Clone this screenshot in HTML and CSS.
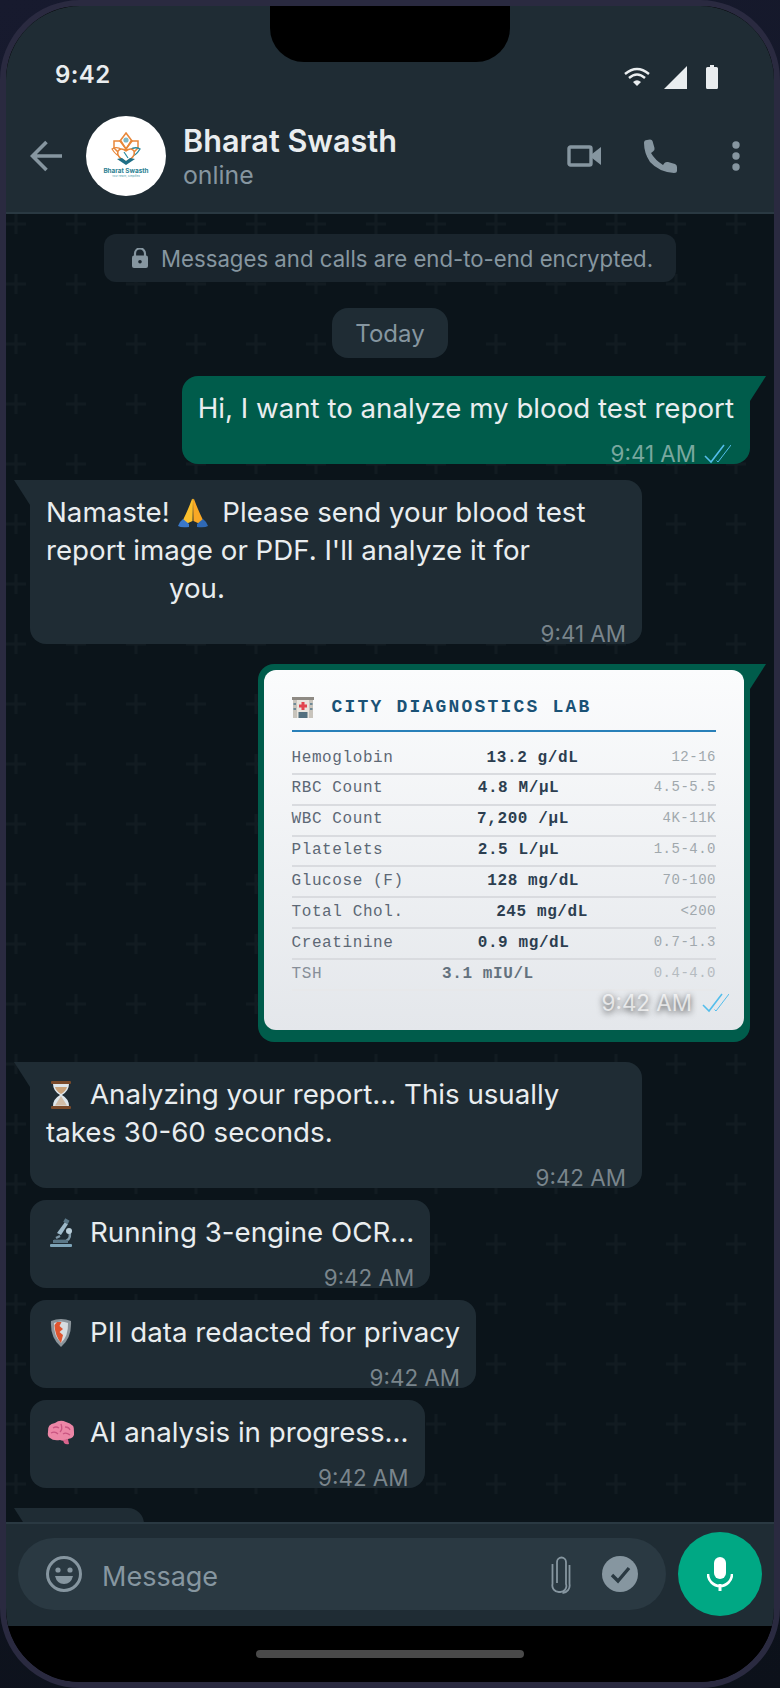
FILE: index.html
```html
<!DOCTYPE html>
<html lang="en">
<head>
<meta charset="utf-8">
<title>Bharat Swasth</title>
<link rel="stylesheet" href="styles.css">
</head>
<body>
<div class="phone">
  <div class="screen">
    <div class="notch"></div>
    <header class="top">
      <div class="status">
        <span class="clock">9:42</span>
        <div class="status-icons">
          <svg class="i-wifi" viewBox="0 0 26 20"><path d="M1 7 Q13 -3 25 7" fill="none" stroke="#e9edef" stroke-width="2.4"/><path d="M5 11 Q13 4 21 11" fill="none" stroke="#e9edef" stroke-width="2.4"/><path d="M9 15 Q13 11.5 17 15 L13 19 Z" fill="#e9edef"/></svg>
          <svg class="i-signal" viewBox="0 0 23 23"><path d="M0 23 L23 0 V23 Z" fill="#e9edef"/></svg>
          <svg class="i-batt" viewBox="0 0 12 24"><path d="M4 0 H8 V2 H10.5 Q12 2 12 3.5 V22.5 Q12 24 10.5 24 H1.5 Q0 24 0 22.5 V3.5 Q0 2 1.5 2 H4 Z" fill="#e9edef"/></svg>
        </div>
      </div>
      <div class="bar">
        <svg class="i-back" viewBox="0 0 32 32"><path d="M16.5 2 L2.5 16 L16.5 30 M3 16 H32" fill="none" stroke="#8696a0" stroke-width="3.6"/></svg>
        <div class="avatar">
          <svg viewBox="0 0 80 80" class="logo">
            <path d="M40 17 L46 25 L40 33 L34 25 Z" fill="none" stroke="#e8873a" stroke-width="1.6"/>
            <path d="M28 25 H35 L40 33 L33 37 L28 32 Z M52 25 H45 L40 33 L47 37 L52 32 Z" fill="none" stroke="#e8873a" stroke-width="1.5"/>
            <path d="M26 33 Q31 30 36 34 L36 40 Q31 41 26 33 Z" fill="none" stroke="#e8873a" stroke-width="1.2"/>
            <path d="M54 33 Q49 30 44 34 L44 40 Q49 41 54 33 Z" fill="none" stroke="#2a8a9e" stroke-width="1.4"/>
            <path d="M40 46 Q30 41 32 35 Q35 31 40 35 Q45 31 48 35 Q50 41 40 46 Z" fill="#fff" stroke="#e8873a" stroke-width="1.5"/>
            <path d="M31 43 L40 49 L49 43 L44 42 L40 45 L36 42 Z" fill="#1f6f86"/>
            <circle cx="40" cy="24" r="2.6" fill="#7fb8c6"/>
            <path d="M38 36 L42 42" stroke="#2a8a9e" stroke-width="1.2"/>
            <text x="40" y="57" class="logo-name">Bharat Swasth</text>
            <text x="40" y="61" class="logo-sub">Your Health, Simplified</text>
          </svg>
        </div>
        <div class="who">
          <div class="name">Bharat Swasth</div>
          <div class="presence">online</div>
        </div>
        <div class="actions">
          <svg class="i-video" viewBox="0 0 34 22"><rect x="2" y="2" width="22" height="18" rx="1.5" fill="none" stroke="#8696a0" stroke-width="3.4"/><path d="M25 9 L34 2 V20 L25 13 Z" fill="#8696a0"/></svg>
          <svg class="i-phone" viewBox="0 0 34 34"><path d="M1 4 Q1 1 4 1 L7 .5 Q9 .5 9.5 2 L11.5 9 Q12 11 10 12.5 L8 14 Q12 21 20 26 L21.500 24 Q23 22.500 25 23 L32 25 Q34 26 34 28 L34 31.500 Q34 34 31 34 Q16 33 7 23 Q1 14 1 4Z" fill="#8696a0"/></svg>
          <svg class="i-dots" viewBox="0 0 34 34"><circle cx="17" cy="6" r="3.700" fill="#8696a0"/><circle cx="17" cy="17" r="3.700" fill="#8696a0"/><circle cx="17" cy="28" r="3.700" fill="#8696a0"/></svg>
        </div>
      </div>
    </header>

    <main class="chat">
      <svg class="wall" width="100%" height="100%">
        <defs>
          <pattern id="plus" width="60" height="60" patternUnits="userSpaceOnUse">
            <rect x="0" y="8.500" width="20" height="3" fill="#121b21"/>
            <rect x="8.500" y="0" width="3" height="20" fill="#121b21"/>
          </pattern>
        </defs>
        <rect width="100%" height="100%" fill="url(#plus)"/>
      </svg>

      <div class="sys"><svg class="i-lock" viewBox="0 0 16 20"><path d="M3 8 V5.500 a5 5 0 0 1 10 0 V8" fill="none" stroke="#8696a0" stroke-width="2.200"/><rect x="0" y="7.500" width="16" height="12.500" rx="2" fill="#8696a0"/><circle cx="8" cy="13.700" r="1.800" fill="#1a252d"/></svg>Messages and calls are end-to-end encrypted.</div>
      <div class="day">Today</div>

      <div class="msg out tail first">
        <div class="txt">Hi, I want to analyze my blood test report</div>
        <div class="meta"><span class="time">9:41 AM</span><svg class="tick" viewBox="0 0 27 20"><path d="M1 12 L7 18 L20 1" fill="none" stroke="#53bdeb" stroke-width="1.600"/><path d="M12.500 16.500 L14 18 L27 1" fill="none" stroke="#53bdeb" stroke-width="1"/></svg></div>
      </div>

      <div class="msg in tail wide gap-m">
        <div class="txt">Namaste! <svg class="emo e-pray" viewBox="0 0 30 30"><path d="M14 1 Q15 0 15 3 L14.500 23 L8 26 L5 22 Q10 12 14 1 Z" fill="#fbc02d"/><path d="M16 1 Q15 0 15 3 L15.500 23 L22 26 L25 22 Q20 12 16 1 Z" fill="#f9a825"/><path d="M5 21 L11 26 L11 29 Q3 30 0 28 Q1 24 5 21 Z" fill="#3a78c9"/><path d="M25 21 L19 26 L19 29 Q27 30 30 28 Q29 24 25 21 Z" fill="#2f69b5"/></svg> Please send your blood test<br>report image or PDF. I'll analyze it for<br><span class="indent">you.</span></div>
        <div class="meta"><span class="time">9:41 AM</span></div>
      </div>

      <div class="msg out tail report gap-l">
        <div class="card">
          <div class="lab"><svg class="e-hosp" viewBox="0 0 22 22"><rect x="1" y="3" width="20" height="19" fill="#c8c4bc"/><rect x="0" y="1" width="22" height="3" fill="#8e8a84"/><rect x="5" y="4" width="12" height="18" fill="#e9e5de"/><path d="M9.500 6 H12.500 V8.500 H15 V11.500 H12.500 V14 H9.500 V11.500 H7 V8.500 H9.500 Z" fill="#e2454f"/><rect x="6.500" y="16" width="9" height="6" fill="#54707f"/><rect x="1.500" y="7" width="2.500" height="2" fill="#6f8996"/><rect x="18" y="7" width="2.500" height="2" fill="#6f8996"/><rect x="1.500" y="12" width="2.500" height="2" fill="#6f8996"/><rect x="18" y="12" width="2.500" height="2" fill="#6f8996"/></svg><span>CITY DIAGNOSTICS LAB</span></div>
          <div class="row"><span class="k">Hemoglobin</span><span class="v">13.2 g/dL</span><span class="r">12-16</span></div>
          <div class="row"><span class="k">RBC Count</span><span class="v">4.8 M/µL</span><span class="r">4.5-5.5</span></div>
          <div class="row"><span class="k">WBC Count</span><span class="v">7,200 /µL</span><span class="r">4K-11K</span></div>
          <div class="row"><span class="k">Platelets</span><span class="v">2.5 L/µL</span><span class="r">1.5-4.0</span></div>
          <div class="row"><span class="k">Glucose (F)</span><span class="v">128 mg/dL</span><span class="r">70-100</span></div>
          <div class="row"><span class="k">Total Chol.</span><span class="v">245 mg/dL</span><span class="r">&lt;200</span></div>
          <div class="row"><span class="k">Creatinine</span><span class="v">0.9 mg/dL</span><span class="r">0.7-1.3</span></div>
          <div class="row faded"><span class="k">TSH</span><span class="v">3.1 mIU/L</span><span class="r">0.4-4.0</span></div>
        </div>
        <div class="stamp"><span class="stamp-time">9:42 AM</span><svg class="tick" viewBox="0 0 27 20"><path d="M1 12 L7 18 L20 1" fill="none" stroke="#53bdeb" stroke-width="1.600"/><path d="M12.500 16.500 L14 18 L27 1" fill="none" stroke="#53bdeb" stroke-width="1"/></svg></div>
      </div>

      <div class="msg in tail wide gap-l">
        <div class="txt"><svg class="emo" viewBox="0 0 30 30"><rect x="5" y="1" width="20" height="3" rx="1" fill="#7a4a2a"/><rect x="5" y="26" width="20" height="3" rx="1" fill="#7a4a2a"/><path d="M7 4 H23 Q23 11 16 15 Q23 19 23 26 H7 Q7 19 14 15 Q7 11 7 4 Z" fill="#dfe7ec"/><path d="M9 7 H21 Q20 11 15 14 Q10 11 9 7 Z" fill="#c9a27a"/><path d="M15 16 L21 25.500 H9 Z" fill="#c9a27a" opacity=".6"/></svg>Analyzing your report... This usually<br>takes 30-60 seconds.</div>
        <div class="meta"><span class="time">9:42 AM</span></div>
      </div>

      <div class="msg in gap-s">
        <div class="txt"><svg class="emo" viewBox="0 0 30 30"><rect x="4" y="26" width="22" height="3" rx="1" fill="#7ea4b8"/><path d="M19 4 L22 6 L15 17 L11 15 Z" fill="#9db9c9"/><rect x="18" y="1" width="5" height="4" fill="#5a7787" transform="rotate(30 20 3)"/><path d="M14 18 L10 20 M8 23 H20 Q26 20 23 13" fill="none" stroke="#7d97a6" stroke-width="2.500"/><circle cx="23" cy="13" r="3" fill="#b8cdd8"/><rect x="7" y="22" width="15" height="3" fill="#5a7787"/></svg>Running 3-engine OCR...</div>
        <div class="meta"><span class="time">9:42 AM</span></div>
      </div>

      <div class="msg in gap-s">
        <div class="txt"><svg class="emo" viewBox="0 0 30 30"><path d="M5 3 Q15 -1 25 3 Q26 20 15 29 Q4 20 5 3 Z" fill="#8b959b"/><path d="M8 5 Q15 2 22 5 Q22.500 18 15 25 Q7.500 18 8 5 Z" fill="#d7dde0"/><path d="M11 4 H15.500 L13.500 8 L17 11 L13.500 14 L17 17 L15 25 Q9 18 8.500 7 Z" fill="#e0552f"/></svg>PII data redacted for privacy</div>
        <div class="meta"><span class="time">9:42 AM</span></div>
      </div>

      <div class="msg in gap-s">
        <div class="txt"><svg class="emo" viewBox="0 0 30 30"><path d="M2 14 Q1 6 9 5 Q14 1 20 4 Q29 6 28 14 Q29 20 22 21 Q18 24 14 22 Q7 23 4 20 Q1 18 2 14 Z" fill="#ec86a6"/><path d="M17 22 L22 21 L23 26 Q20 27 18 25 Z" fill="#d9648c"/><path d="M7 10 Q10 8 13 10 M5 15 Q9 13 12 16 M15 6 Q17 11 14 14 M19 9 Q23 9 24 12 M17 16 Q20 14 24 17" fill="none" stroke="#c95581" stroke-width="1.300"/></svg>AI analysis in progress...</div>
        <div class="meta"><span class="time">9:42 AM</span></div>
      </div>

      <div class="msg in tail typing gap-l"></div>
    </main>

    <footer class="compose">
      <div class="pill">
        <svg class="i-smile" viewBox="0 0 36 36"><circle cx="18" cy="18" r="16.500" fill="none" stroke="#8696a0" stroke-width="3"/><circle cx="12" cy="14" r="2.600" fill="#8696a0"/><circle cx="24" cy="14" r="2.600" fill="#8696a0"/><path d="M9 20 H27 Q25 28 18 28 Q11 28 9 20 Z" fill="#8696a0"/></svg>
        <span class="placeholder">Message</span>
        <svg class="i-clip" viewBox="0 0 20 40"><path d="M6 29 V8 a4.500 4.500 0 0 1 9 0 V30 a6 6 0 0 1 -6 8 h-1 a6.500 6.500 0 0 1 -6.500 -8 V10 M18.500 11 V30 a7.500 7.500 0 0 1 -7 9" fill="none" stroke="#8696a0" stroke-width="1.800"/></svg>
        <svg class="i-check" viewBox="0 0 36 36"><circle cx="18" cy="18" r="18" fill="#8696a0"/><path d="M10 19 L16 25 L27 12" fill="none" stroke="#2a3942" stroke-width="3.400"/></svg>
      </div>
      <div class="mic">
        <svg class="i-mic" viewBox="0 0 26 34"><rect x="7" y="0" width="12" height="22" rx="6" fill="#fff"/><path d="M1 17 a12 12 0 0 0 24 0" fill="none" stroke="#fff" stroke-width="2.600"/><rect x="11.500" y="27" width="3" height="7" fill="#fff"/></svg>
      </div>
    </footer>

    <div class="home"><div class="home-bar"></div></div>
  </div>
</div>
</body>
</html>
```

FILE: styles.css
```css
* { box-sizing: border-box; }
html, body { margin: 0; padding: 0; }
body {
  width: 780px;
  height: 1688px;
  overflow: hidden;
  background: #0c111a;
  font-family: Inter, "Noto Sans", "Liberation Sans", sans-serif;
  color: #e9edef;
}
.phone {
  width: 780px;
  height: 1688px;
  background: linear-gradient(160deg, #171a2e, #0c111a);
}
.screen {
  position: relative;
  width: 780px;
  height: 1688px;
  border: 6px solid #2a2a40;
  border-radius: 80px;
  overflow: hidden;
  display: flex;
  flex-direction: column;
  background: #000;
}
.notch {
  position: absolute;
  top: 0;
  left: 264px;
  width: 240px;
  height: 56px;
  background: #000;
  border-radius: 0 0 34px 34px;
  z-index: 3;
}

/* top */
.top {
  background: #1f2c34;
  border-bottom: 2px solid #2a3942;
  flex: none;
}
.status {
  height: 94px;
  padding: 54px 0 0 49px;
  display: flex;
  justify-content: space-between;
  align-items: flex-start;
}
.clock {
  font-size: 24px;
  line-height: 30px;
  font-weight: 600;
  letter-spacing: .4px;
}
.status-icons {
  display: flex;
  align-items: center;
  gap: 14px;
  padding: 4px 56px 0 0;
  height: 30px;
}
.i-wifi { width: 26px; height: 20px; display: block; }
.i-signal { width: 23px; height: 23px; display: block; }
.i-batt { width: 12px; height: 24px; display: block; margin-left: 5px; }
.bar {
  display: flex;
  align-items: center;
  padding: 16px 21px 16px 24px;
}
.i-back { width: 32px; height: 32px; flex: none; }
.avatar {
  width: 80px;
  height: 80px;
  border-radius: 50%;
  background: #fff;
  margin-left: 24px;
  flex: none;
}
.logo { width: 80px; height: 80px; display: block; }
.logo-name { font-size: 6.400px; font-weight: 700; fill: #2a7f92; text-anchor: middle; }
.logo-sub { font-size: 2.600px; fill: #4a9aab; text-anchor: middle; }
.who { margin: 7px 0 0 17px; align-self: flex-start; }
.name { font-size: 30.600px; line-height: 36px; font-weight: 600; }
.presence { font-size: 24.800px; line-height: 30px; margin-top: 1px; color: #8696a0; }
.actions {
  margin-left: auto;
  display: flex;
  align-items: center;
  gap: 42px;
}
.i-video { width: 34px; height: 22px; display: block; }
.i-phone { width: 34px; height: 34px; display: block; }
.i-dots { width: 34px; height: 34px; display: block; }

/* chat */
.chat {
  position: relative;
  flex: 1 1 0;
  min-height: 0;
  overflow: hidden;
  background: #0b141a;
  display: flex;
  flex-direction: column;
  padding: 20px 24px 0;
}
.wall { position: absolute; left: 0; top: 0; }
.sys {
  position: relative;
  flex: none;
  align-self: center;
  display: flex;
  align-items: center;
  height: 48px;
  width: 572px;
  padding-left: 28px;
  background: #1a252d;
  border-radius: 12px;
  color: #8696a0;
  font-size: 22.200px;
  white-space: nowrap;
}
.i-lock { width: 16px; height: 20px; margin-right: 13px; flex: none; }
.day {
  position: relative;
  flex: none;
  align-self: center;
  width: 116px;
  height: 50px;
  margin-top: 26px;
  border-radius: 16px;
  background: #1f2c34;
  color: #8696a0;
  font-size: 24px;
  line-height: 52px;
  text-align: center;
}
.msg {
  position: relative;
  flex: none;
  padding: 13px 16px 0;
  border-radius: 16px;
  font-size: 27.700px;
  line-height: 38px;
}
.msg.first { margin-top: 18px; }
.gap-s { margin-top: 12px; }
.gap-m { margin-top: 16px; }
.gap-l { margin-top: 20px; }
.in { background: #1f2c34; align-self: flex-start; }
.out { background: #005c4b; align-self: flex-end; }
.wide { width: 612px; }
.tail.in { border-top-left-radius: 0; }
.tail.out { border-top-right-radius: 0; }
.tail.in::before, .tail.out::before {
  content: "";
  position: absolute;
  top: 0;
  width: 16px;
  height: 25px;
}
.tail.in::before {
  left: -16px;
  background: #1f2c34;
  clip-path: polygon(0 0, 100% 0, 100% 100%);
}
.tail.out::before {
  right: -16px;
  background: #005c4b;
  clip-path: polygon(0 0, 100% 0, 0 100%);
}
.txt { white-space: nowrap; }
.indent { padding-left: 123px; }
.emo {
  width: 30px;
  height: 30px;
  vertical-align: -6px;
  margin: 0 14px 0 0;
}
.emo.e-pray { margin: 0 7px 0 0; }
.meta {
  display: flex;
  justify-content: flex-end;
  align-items: center;
  gap: 8px;
  height: 26px;
  margin: 13.500px 0 -2.500px;
  line-height: 26px;
}
.time { font-size: 22.400px; color: #7a858c; }
.out .time { color: #79a89f; }
.tick { width: 27px; height: 20px; flex: none; margin-right: 3px; }

/* report */
.report { padding: 6px 6px 12px; }
.card {
  width: 480px;
  height: 360px;
  padding: 20px 28px 0 27.500px;
  border-radius: 12px;
  background: linear-gradient(180deg, #fbfcfd, #e4e7eb);
  font-family: "Liberation Mono", monospace;
}
.lab {
  display: flex;
  align-items: center;
  height: 40px;
  border-bottom: 2px solid #2980b9;
  color: #1a5276;
  font-size: 18px;
  font-weight: 700;
  letter-spacing: 2.200px;
  box-sizing: content-box;
  margin-bottom: 12px;
}
.lab span { margin: -6px 0 0 18px; line-height: 26px; }
.e-hosp { width: 22px; height: 22px; flex: none; margin-top: -6px; }
.row {
  display: flex;
  justify-content: space-between;
  align-items: flex-start;
  height: 30.860px;
  padding-top: 3.500px;
  border-bottom: 2px solid #d9dbdf;
  font-size: 16px;
  line-height: 20px;
  letter-spacing: .6px;
}
.k { color: #5d6875; }
.v { color: #2c3e50; font-weight: 700; }
.r { color: #a0a8ad; font-size: 14px; line-height: 18px; letter-spacing: .5px; }
.faded { opacity: .7; border-bottom-color: #e8e8ea; }
.stamp {
  position: absolute;
  right: 21px;
  bottom: 26px;
  display: flex;
  align-items: center;
  gap: 10px;
}
.stamp-time {
  font-size: 22.400px;
  line-height: 26px;
  color: rgba(255,255,255,.7);
  text-shadow: 0 2px 6px rgba(0,0,0,.7);
}
.stamp .tick { margin: 0; }
.typing { width: 114px; height: 60px; }

/* compose */
.compose {
  flex: none;
  display: flex;
  align-items: center;
  gap: 12px;
  height: 104px;
  padding: 8px 12px 10px;
  background: #1f2c34;
  border-top: 2px solid #2a3942;
}
.pill {
  flex: 1;
  height: 72px;
  border-radius: 36px;
  background: #2a3942;
  display: flex;
  align-items: center;
  padding: 0 28px;
}
.i-smile { width: 36px; height: 36px; flex: none; }
.placeholder { margin: 5px 0 0 20px; font-size: 27px; color: #8696a0; }
.i-clip { width: 20px; height: 40px; margin-left: auto; flex: none; }
.i-check { width: 36px; height: 36px; margin-left: 31px; flex: none; }
.mic {
  width: 84px;
  height: 84px;
  border-radius: 50%;
  background: #00a884;
  flex: none;
  display: flex;
  align-items: center;
  justify-content: center;
}
.i-mic { width: 26px; height: 34px; }
.home {
  flex: none;
  height: 56px;
  background: #000;
  display: flex;
  align-items: center;
  justify-content: center;
}
.home-bar { width: 268px; height: 8px; border-radius: 4px; background: #4a4a4a; }
```
